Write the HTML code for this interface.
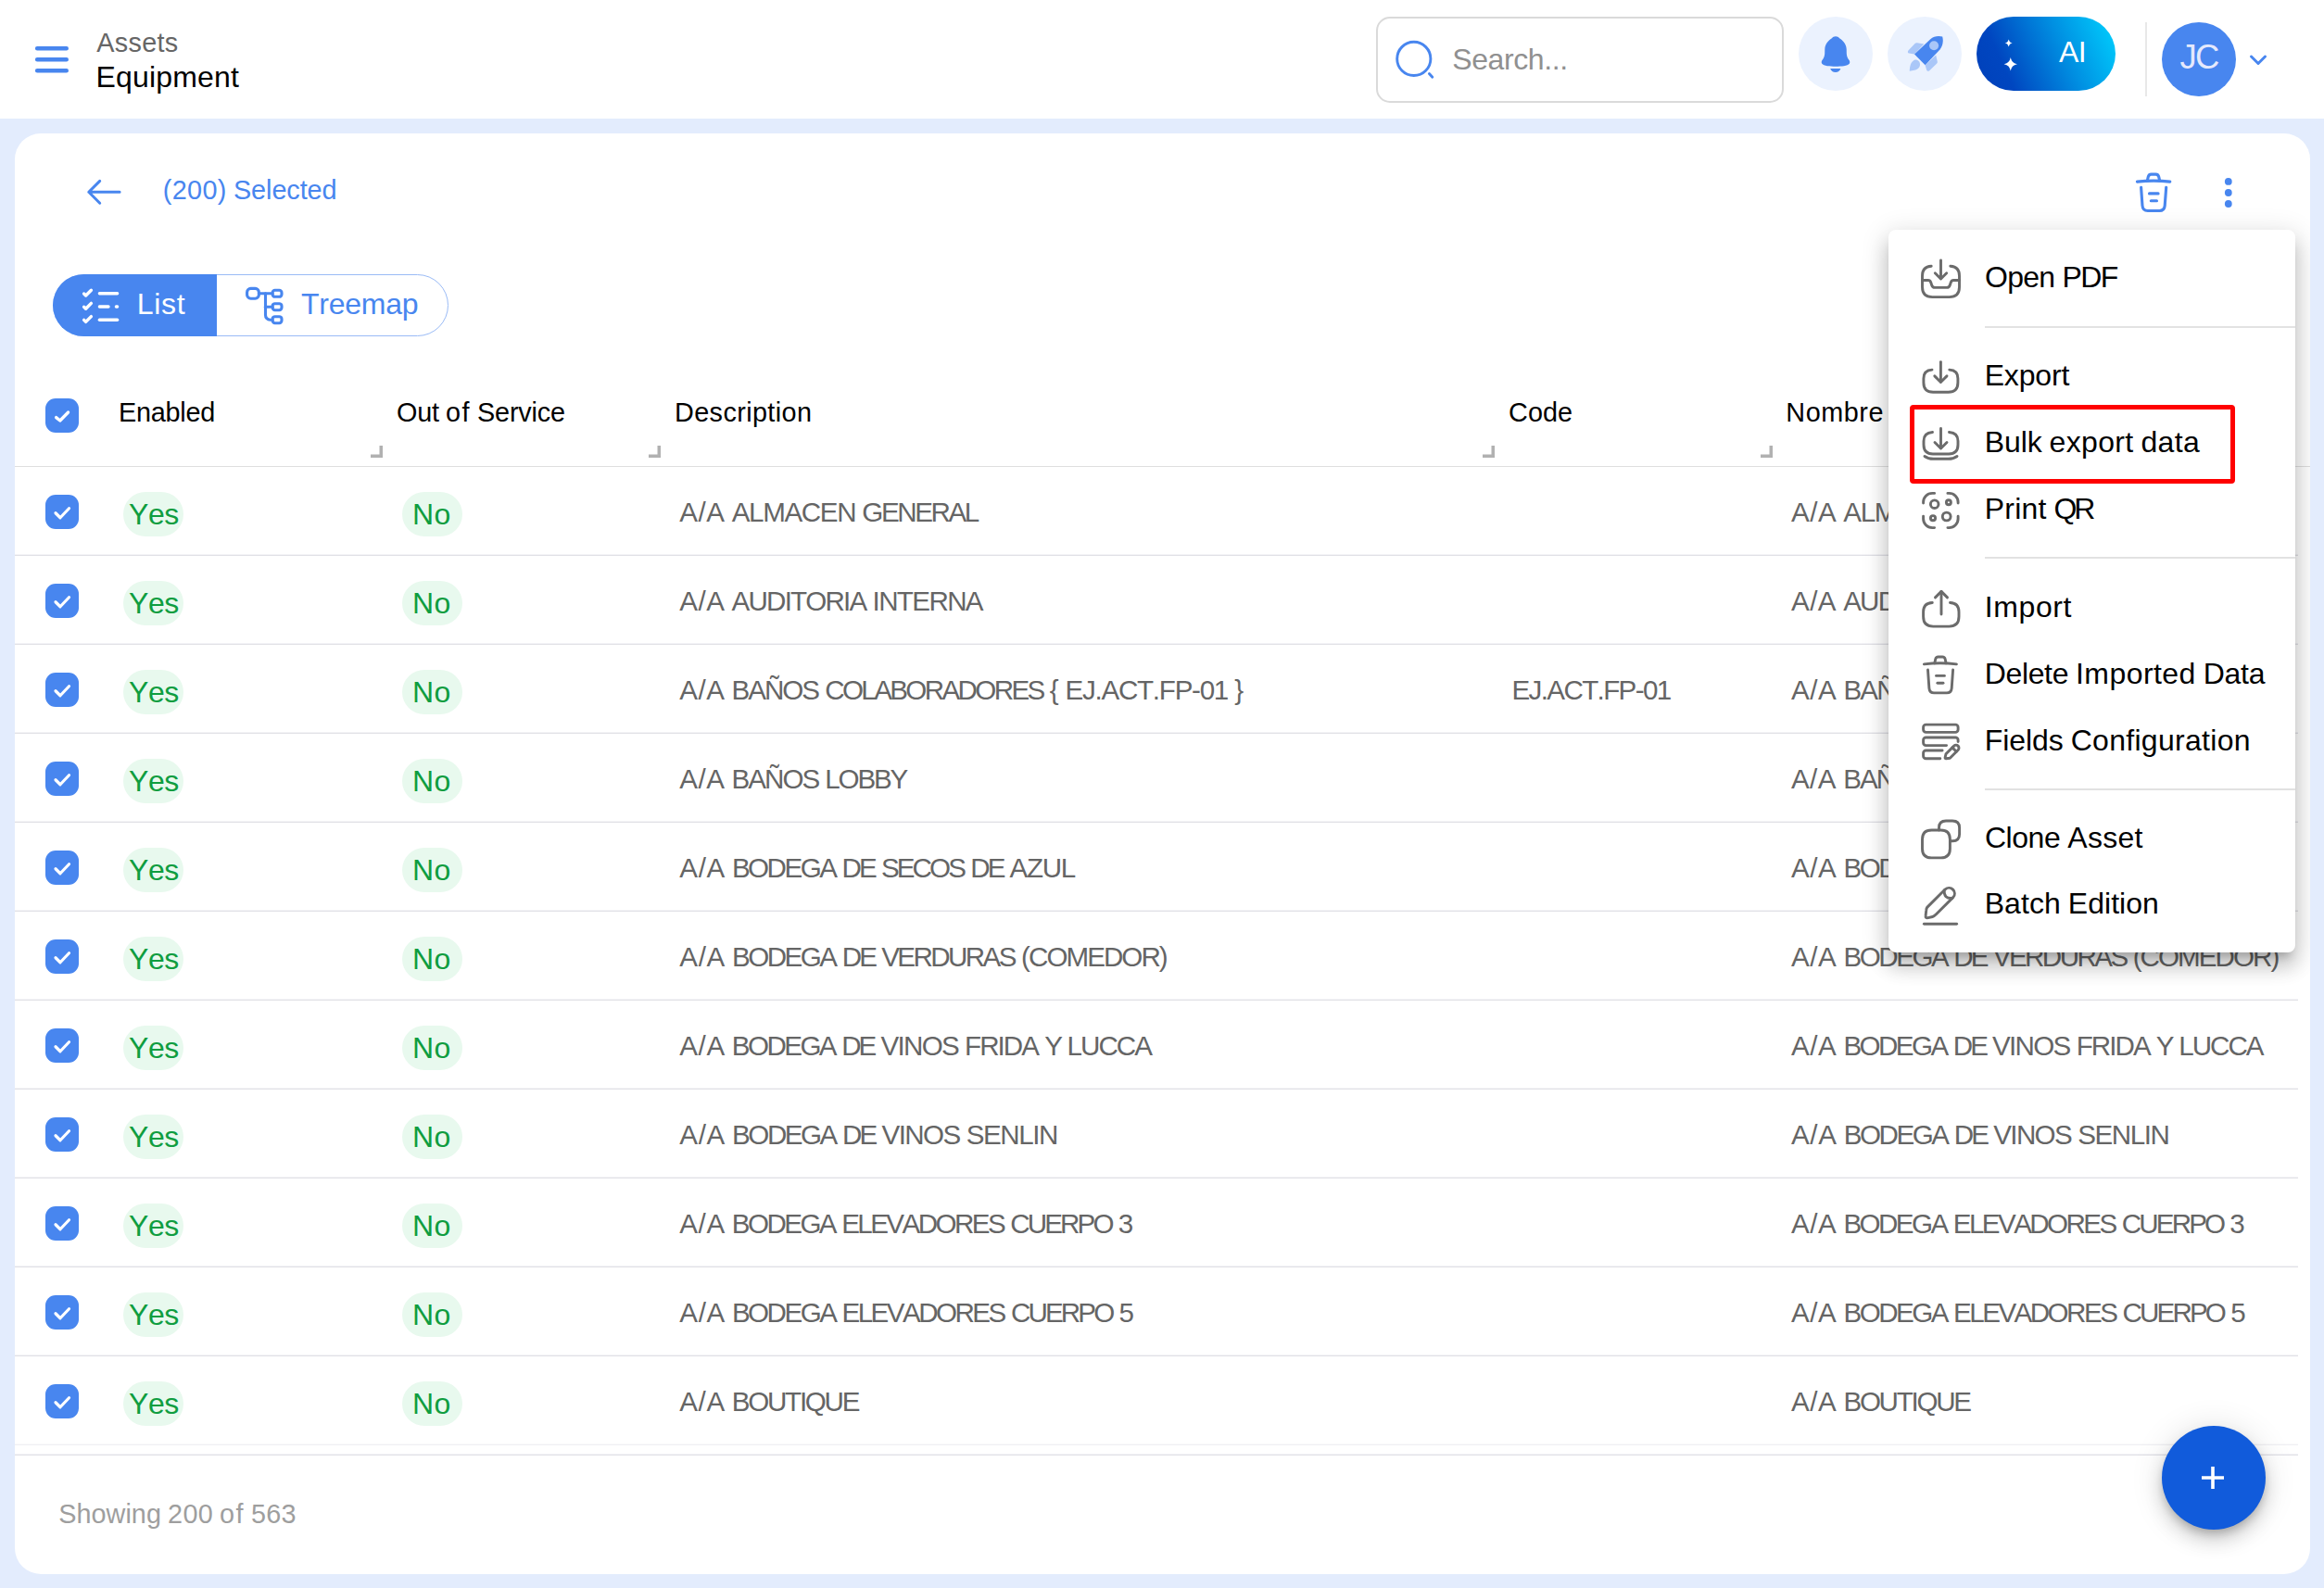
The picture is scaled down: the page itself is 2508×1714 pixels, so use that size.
<!DOCTYPE html>
<html lang="en"><head><meta charset="utf-8"><title>Equipment</title>
<style>
*{box-sizing:border-box;margin:0;padding:0}
html,body{width:2508px;height:1714px;overflow:hidden;background:#e3ecfd;font-family:"Liberation Sans",Arial,sans-serif}
.abs,.t,.cb,.pill,.hl,.mi,.rh{position:absolute}
.t{white-space:pre;line-height:1;font-kerning:none}
#hdr{position:absolute;left:0;top:0;width:2508px;height:128px;background:#fff}
#card{position:absolute;left:16px;top:144px;width:2477px;height:1555px;background:#fff;border-radius:28px}
.cb{left:49px;width:36px;height:37.5px;border-radius:11px;background:#4886ef}
.cb svg{display:block;width:36px;height:37.5px}
.pill{height:47.800px;border-radius:24px;background:#e8f9ee}
.hl{left:16px;width:2464px;height:2px;background:linear-gradient(#f3f3f6 50%,#e1e1e6 50%)}
.mi{left:2070px;width:48px;height:48px}
.rh{top:481.400px;width:13px;height:13px}
#menu{position:absolute;left:2022px;top:104px;width:439px;height:780px;background:#fff;border-radius:8px;box-shadow:0 10px 10px -6px rgba(0,0,0,.2),0 16px 20px 2px rgba(0,0,0,.14),0 6px 28px 4px rgba(0,0,0,.12)}
#clip{position:absolute;left:16px;top:144px;width:2477px;height:1555px;border-radius:28px;overflow:hidden}
.md{position:absolute;left:2142px;width:335px;height:2px;background:#e2e2e2}
</style></head><body>
<div id="hdr"></div>
<div id="card"></div>

<!-- hamburger -->
<svg class="abs" style="left:36px;top:48px" width="40" height="34" viewBox="0 0 40 34"><path d="M4.2 4.2h31.5M4.2 16.2h31.5M4.2 28.300h31.5" stroke="#4886ef" stroke-width="4.600" stroke-linecap="round"/></svg>

<!-- search -->
<div class="abs" style="left:1484.800px;top:17.5px;width:440.400px;height:93px;border:2px solid #dadada;border-radius:15px;background:#fff"></div>
<svg class="abs" style="left:1504px;top:42px" width="46" height="46" viewBox="0 0 46 46"><circle cx="21.800" cy="21.400" r="18.100" fill="none" stroke="#4886ef" stroke-width="2.900"/><path d="M38.400 37.5l3.400 3.700" stroke="#4886ef" stroke-width="2.900" stroke-linecap="round"/></svg>

<!-- bell -->
<div class="abs" style="left:1941px;top:17.5px;width:80px;height:80px;border-radius:50%;background:#ebf2fe"></div>
<svg class="abs" style="left:1961px;top:37px" width="40" height="42" viewBox="0 0 40 42"><path d="M20 2.300C18.2 2.300 17 3.2 15.600 4.400 12.600 6.600 8.600 9.600 8.300 16L8.2 21C8 24 7 26 5.800 27.600 4.600 29 4.400 30.5 5.2 31.800 7 34.2 14 34.800 20 34.800S33 34.2 34.800 31.800C35.600 30.5 35.400 29 34.2 27.600 33 26 32 24 31.800 21L31.700 16C31.400 9.600 27.400 6.600 24.400 4.400 23 3.2 21.800 2.300 20 2.300Z" fill="#4886ef"/><path d="M14.2 36.900H25.400C24.400 39.600 22.600 41 19.800 41S15.2 39.600 14.2 36.900Z" fill="#4886ef"/></svg>

<!-- rocket -->
<div class="abs" style="left:2037px;top:17.5px;width:80px;height:80px;border-radius:50%;background:#ebf2fe"></div>
<svg class="abs" style="left:2057px;top:37px" width="42" height="42" viewBox="0 0 42 42">
<path d="M2.400 17.5L9.800 9.800C10.400 9.2 11 9 11.800 9.2L19.300 10.400 9 21.600 3.2 20.600C1.800 20.300 1.400 18.700 2.400 17.5Z" fill="#aac7f8"/>
<path d="M20.600 33.2L32.2 22.5 33.800 29.5C34 30.300 33.800 31 33.2 31.600L25.2 39.300C24.2 40.2 22.600 39.900 22.100 38.600Z" fill="#aac7f8"/>
<path d="M3.800 39.700C3.800 35 5 30 8.5 28 11.5 26.5 15 29 15 32.400 15 36 12 38 9 38.800 7 39.300 5.5 39.600 3.800 39.700Z" fill="#aac7f8"/>
<path d="M9 21.600L26 5.5C30 2 35 1.5 39.2 2.600 40.400 7 39.800 12 36.5 16.5L20.600 33.2Z" fill="#4886ef"/>
<circle cx="30.100" cy="12.2" r="5" fill="#aac7f8"/>
</svg>

<!-- AI -->
<div class="abs" style="left:2133px;top:17.5px;width:150px;height:80px;border-radius:40px;background:linear-gradient(66deg,#0040ba 0%,#0046c0 22%,#0090e2 62%,#00d2ff 100%)"></div>
<svg class="abs" style="left:2155px;top:36px" width="30" height="46" viewBox="0 0 30 46" fill="#fff"><path d="M12.700 6.5c.8 2.600 1.400 3.2 4 4-2.600.8-3.2 1.400-4 4-.8-2.600-1.400-3.2-4-4 2.600-.8 3.2-1.400 4-4z"/><path d="M14.800 26c1.400 4.800 2.400 5.800 7.2 7.2-4.800 1.400-5.800 2.400-7.2 7.2-1.400-4.800-2.400-5.800-7.2-7.2 4.800-1.400 5.800-2.400 7.2-7.2z"/></svg>

<!-- divider + avatar -->
<div class="abs" style="left:2315px;top:24px;width:2px;height:80px;background:#e8e8e8"></div>
<div class="abs" style="left:2333px;top:24px;width:80px;height:80px;border-radius:50%;background:#4886ef"></div>
<svg class="abs" style="left:2425px;top:56px" width="24" height="18" viewBox="0 0 24 18"><path d="M4.5 5l7.5 7.5L19.5 5" fill="none" stroke="#4886ef" stroke-width="3" stroke-linecap="round" stroke-linejoin="round"/></svg>

<!-- back arrow -->
<svg class="abs" style="left:90px;top:190px" width="44" height="36" viewBox="0 0 44 36"><path d="M39.100 17.300H5.800M17.700 5.400L5.800 17.300 17.700 29.2" fill="none" stroke="#4886ef" stroke-width="3" stroke-linecap="round" stroke-linejoin="round"/></svg>

<!-- trash + dots -->
<svg class="abs" style="left:2302px;top:184px" width="44" height="48" viewBox="0 0 44 48" fill="none" stroke="#4886ef" stroke-width="3.100" stroke-linecap="round" stroke-linejoin="round"><path d="M4.400 12.100Q22.100 10.100 39.800 12.100"/><path d="M15.400 10.800l.8-3.700c.4-2 1.400-3 3.400-3h4.800c2 0 3 1 3.400 3l.8 3.700"/><path d="M8.600 18.2L10 38c.3 3.700 2.100 5.5 5.800 5.5h12.600c3.700 0 5.5-1.800 5.800-5.5L35.700 18.2"/><path d="M17.5 24.900h9.600"/><path d="M19.300 32.800h6.2"/></svg>
<svg class="abs" style="left:2396px;top:188px" width="18" height="40" viewBox="0 0 18 40" fill="#4886ef"><circle cx="8.800" cy="7.900" r="3.900"/><circle cx="8.800" cy="20" r="3.900"/><circle cx="8.800" cy="32" r="3.900"/></svg>

<!-- segmented -->
<div class="abs" style="left:57px;top:296px;width:427px;height:67px;border-radius:34px;border:1.5px solid #9abbf6;background:#fff"></div>
<div class="abs" style="left:57px;top:296px;width:177px;height:67px;border-radius:34px 0 0 34px;background:#4886ef"></div>
<svg class="abs" style="left:86px;top:308px" width="46" height="44" viewBox="0 0 46 44" fill="none" stroke="#fff" stroke-width="3.400" stroke-linecap="round" stroke-linejoin="round"><path d="M4.600 9L6.600 11l5.800-5.800"/><path d="M4.600 23.2l2 2 5.800-5.800"/><path d="M4.600 37.400l2 2 5.800-5.800"/><path d="M21.400 8.800h19.2"/><path d="M21.400 23H31M39.400 23h1.2"/><path d="M21.400 37.2h19.2"/></svg>
<svg class="abs" style="left:262px;top:307px" width="46" height="46" viewBox="0 0 46 46" fill="none" stroke="#4886ef" stroke-width="3.100" stroke-linecap="round" stroke-linejoin="round"><rect x="4.600" y="4.400" width="12.800" height="10.800" rx="4"/><rect x="32.100" y="6.300" width="9.900" height="7" rx="2.600"/><rect x="32.100" y="20.700" width="9.900" height="7" rx="2.600"/><rect x="32.100" y="34.700" width="9.900" height="7" rx="2.600"/><path d="M17.400 9.700H32.100"/><path d="M24.5 9.700V33a5 5 0 0 0 5 5.2h2.600"/><path d="M24.5 24.2h7.600"/></svg>

<!-- table header -->
<div class="cb" style="top:429.600px"><svg viewBox="0 0 36 37.5"><path d="M11.600 20.600L15.800 24l8.800-9" fill="none" stroke="#fff" stroke-width="3.300" stroke-linecap="round" stroke-linejoin="round"/></svg></div>
<svg class="rh" style="left:400px" viewBox="0 0 13 13"><path d="M0 11.250h11.250V0" fill="none" stroke="#b1b1b1" stroke-width="3.5"/></svg><svg class="rh" style="left:700px" viewBox="0 0 13 13"><path d="M0 11.250h11.250V0" fill="none" stroke="#b1b1b1" stroke-width="3.5"/></svg><svg class="rh" style="left:1600px" viewBox="0 0 13 13"><path d="M0 11.250h11.250V0" fill="none" stroke="#b1b1b1" stroke-width="3.5"/></svg><svg class="rh" style="left:1900px" viewBox="0 0 13 13"><path d="M0 11.250h11.250V0" fill="none" stroke="#b1b1b1" stroke-width="3.5"/></svg>
<div class="hl" style="top:502.700px;height:1.100px;width:2477px;background:#dfdfdf"></div>
<div class="cb" style="top:533.5px"><svg viewBox="0 0 36 37"><path d="M11 19.5l5 5 9.5-10" fill="none" stroke="#fff" stroke-width="3.2" stroke-linecap="round" stroke-linejoin="round"/></svg></div><div class="pill" style="left:133px;top:531.3px;width:65.2px"></div><div class="pill" style="left:433.800px;top:531.3px;width:65.2px"></div><div class="hl" style="top:598px"></div><div class="cb" style="top:629.5px"><svg viewBox="0 0 36 37"><path d="M11 19.5l5 5 9.5-10" fill="none" stroke="#fff" stroke-width="3.2" stroke-linecap="round" stroke-linejoin="round"/></svg></div><div class="pill" style="left:133px;top:627.3px;width:65.2px"></div><div class="pill" style="left:433.800px;top:627.3px;width:65.2px"></div><div class="hl" style="top:694px"></div><div class="cb" style="top:725.5px"><svg viewBox="0 0 36 37"><path d="M11 19.5l5 5 9.5-10" fill="none" stroke="#fff" stroke-width="3.2" stroke-linecap="round" stroke-linejoin="round"/></svg></div><div class="pill" style="left:133px;top:723.3px;width:65.2px"></div><div class="pill" style="left:433.800px;top:723.3px;width:65.2px"></div><div class="hl" style="top:790px"></div><div class="cb" style="top:821.5px"><svg viewBox="0 0 36 37"><path d="M11 19.5l5 5 9.5-10" fill="none" stroke="#fff" stroke-width="3.2" stroke-linecap="round" stroke-linejoin="round"/></svg></div><div class="pill" style="left:133px;top:819.3px;width:65.2px"></div><div class="pill" style="left:433.800px;top:819.3px;width:65.2px"></div><div class="hl" style="top:886px"></div><div class="cb" style="top:917.5px"><svg viewBox="0 0 36 37"><path d="M11 19.5l5 5 9.5-10" fill="none" stroke="#fff" stroke-width="3.2" stroke-linecap="round" stroke-linejoin="round"/></svg></div><div class="pill" style="left:133px;top:915.3px;width:65.2px"></div><div class="pill" style="left:433.800px;top:915.3px;width:65.2px"></div><div class="hl" style="top:982px"></div><div class="cb" style="top:1013.5px"><svg viewBox="0 0 36 37"><path d="M11 19.5l5 5 9.5-10" fill="none" stroke="#fff" stroke-width="3.2" stroke-linecap="round" stroke-linejoin="round"/></svg></div><div class="pill" style="left:133px;top:1011.3px;width:65.2px"></div><div class="pill" style="left:433.800px;top:1011.3px;width:65.2px"></div><div class="hl" style="top:1078px"></div><div class="cb" style="top:1109.5px"><svg viewBox="0 0 36 37"><path d="M11 19.5l5 5 9.5-10" fill="none" stroke="#fff" stroke-width="3.2" stroke-linecap="round" stroke-linejoin="round"/></svg></div><div class="pill" style="left:133px;top:1107.3px;width:65.2px"></div><div class="pill" style="left:433.800px;top:1107.3px;width:65.2px"></div><div class="hl" style="top:1174px"></div><div class="cb" style="top:1205.5px"><svg viewBox="0 0 36 37"><path d="M11 19.5l5 5 9.5-10" fill="none" stroke="#fff" stroke-width="3.2" stroke-linecap="round" stroke-linejoin="round"/></svg></div><div class="pill" style="left:133px;top:1203.3px;width:65.2px"></div><div class="pill" style="left:433.800px;top:1203.3px;width:65.2px"></div><div class="hl" style="top:1270px"></div><div class="cb" style="top:1301.5px"><svg viewBox="0 0 36 37"><path d="M11 19.5l5 5 9.5-10" fill="none" stroke="#fff" stroke-width="3.2" stroke-linecap="round" stroke-linejoin="round"/></svg></div><div class="pill" style="left:133px;top:1299.3px;width:65.2px"></div><div class="pill" style="left:433.800px;top:1299.3px;width:65.2px"></div><div class="hl" style="top:1366px"></div><div class="cb" style="top:1397.5px"><svg viewBox="0 0 36 37"><path d="M11 19.5l5 5 9.5-10" fill="none" stroke="#fff" stroke-width="3.2" stroke-linecap="round" stroke-linejoin="round"/></svg></div><div class="pill" style="left:133px;top:1395.3px;width:65.2px"></div><div class="pill" style="left:433.800px;top:1395.3px;width:65.2px"></div><div class="hl" style="top:1462px"></div><div class="cb" style="top:1493.5px"><svg viewBox="0 0 36 37"><path d="M11 19.5l5 5 9.5-10" fill="none" stroke="#fff" stroke-width="3.2" stroke-linecap="round" stroke-linejoin="round"/></svg></div><div class="pill" style="left:133px;top:1491.3px;width:65.2px"></div><div class="pill" style="left:433.800px;top:1491.3px;width:65.2px"></div><div class="hl" style="top:1558px;background:linear-gradient(#fafafb 50%,#f0f0f3 50%)"></div>
<div class="hl" style="top:1569px"></div>

<!-- FAB -->
<div class="abs" style="left:2333px;top:1539px;width:112px;height:112px;border-radius:50%;background:#115bdb;box-shadow:0 6px 10px -2px rgba(0,0,0,.2),0 12px 20px 0 rgba(0,0,0,.14),0 2px 36px 0 rgba(0,0,0,.12)"></div>
<svg class="abs" style="left:2372.400px;top:1578.900px" width="32" height="32" viewBox="0 0 32 32"><path d="M16 4v24M4 16h24" stroke="#fff" stroke-width="3.600"/></svg>

<span class="t" style="left:104.3px;top:31.7px;font-size:28.8px;color:#666;letter-spacing:0.28px;">Assets</span>
<span class="t" style="left:103.6px;top:66.9px;font-size:32px;color:#000;letter-spacing:0.17px;">Equipment</span>
<span class="t" style="left:1567.2px;top:47.9px;font-size:32px;color:#909090;letter-spacing:-0.40px;">Search...</span>
<span class="t" style="left:2222.0px;top:39.9px;font-size:32px;color:#fff;letter-spacing:-0.47px;">AI</span>
<span class="t" style="left:2352.5px;top:43.6px;font-size:36.5px;color:#e5e9fc;letter-spacing:-1.63px;">JC</span>
<span class="t" style="left:175.8px;top:191.1px;font-size:28.8px;color:#4886ef;"><span style="letter-spacing:0.35px;word-spacing:-1.16px">(200) </span><span style="letter-spacing:-0.07px">Selected</span></span>
<span class="t" style="left:147.8px;top:311.9px;font-size:32px;color:#fff;letter-spacing:0.67px;">List</span>
<span class="t" style="left:325.0px;top:311.9px;font-size:32px;color:#4886ef;letter-spacing:-0.24px;">Treemap</span>
<span class="t" style="left:127.9px;top:430.6px;font-size:28.8px;color:#000;letter-spacing:-0.20px;">Enabled</span>
<span class="t" style="left:428.1px;top:430.6px;font-size:28.8px;color:#000;"><span style="letter-spacing:-0.23px;word-spacing:-0.54px">Out </span><span style="letter-spacing:1.39px;word-spacing:-2.16px">of </span><span style="letter-spacing:-0.19px">Service</span></span>
<span class="t" style="left:728.0px;top:430.6px;font-size:28.8px;color:#000;letter-spacing:0.39px;">Description</span>
<span class="t" style="left:1628.1px;top:430.6px;font-size:28.8px;color:#000;letter-spacing:-0.00px;">Code</span>
<span class="t" style="left:1927.3px;top:430.6px;font-size:28.8px;color:#000;letter-spacing:0.55px;">Nombre</span>
<span class="t" style="left:733.3px;top:538.3px;font-size:29.6px;color:#656565;"><span style="letter-spacing:0.53px;word-spacing:-1.65px">A/A </span><span style="letter-spacing:-1.37px;word-spacing:0.26px">ALMACEN </span><span style="letter-spacing:-2.41px">GENERAL</span></span>
<span class="t" style="left:1932.9px;top:538.3px;font-size:29.6px;color:#656565;"><span style="letter-spacing:0.53px;word-spacing:-1.65px">A/A </span><span style="letter-spacing:-1.37px;word-spacing:0.26px">ALMACEN </span><span style="letter-spacing:-2.41px">GENERAL</span></span>
<span class="t" style="left:139.1px;top:538.9px;font-size:32px;color:#0f9d40;letter-spacing:-0.55px;">Yes</span>
<span class="t" style="left:444.9px;top:538.9px;font-size:32px;color:#0f9d40;letter-spacing:0.58px;">No</span>
<span class="t" style="left:733.3px;top:634.3px;font-size:29.6px;color:#656565;"><span style="letter-spacing:0.50px;word-spacing:-1.63px">A/A </span><span style="letter-spacing:-1.81px;word-spacing:0.69px">AUDITORIA </span><span style="letter-spacing:-1.64px">INTERNA</span></span>
<span class="t" style="left:1932.9px;top:634.3px;font-size:29.6px;color:#656565;"><span style="letter-spacing:0.50px;word-spacing:-1.63px">A/A </span><span style="letter-spacing:-1.81px;word-spacing:0.69px">AUDITORIA </span><span style="letter-spacing:-1.64px">INTERNA</span></span>
<span class="t" style="left:139.1px;top:634.9px;font-size:32px;color:#0f9d40;letter-spacing:-0.55px;">Yes</span>
<span class="t" style="left:444.9px;top:634.9px;font-size:32px;color:#0f9d40;letter-spacing:0.58px;">No</span>
<span class="t" style="left:733.3px;top:730.3px;font-size:29.6px;color:#656565;"><span style="letter-spacing:0.48px;word-spacing:-1.62px">A/A </span><span style="letter-spacing:-2.01px;word-spacing:0.87px">BAÑOS </span><span style="letter-spacing:-2.63px;word-spacing:1.49px">COLABORADORES </span><span style="letter-spacing:-0.20px;word-spacing:-0.94px">{ </span><span style="letter-spacing:-1.27px;word-spacing:0.14px">EJ.ACT.FP-01 </span><span style="letter-spacing:-0.20px">}</span></span>
<span class="t" style="left:1631.5px;top:730.3px;font-size:29.6px;color:#656565;letter-spacing:-1.64px;">EJ.ACT.FP-01</span>
<span class="t" style="left:1932.9px;top:730.3px;font-size:29.6px;color:#656565;"><span style="letter-spacing:0.58px;word-spacing:-1.67px">A/A </span><span style="letter-spacing:-1.90px;word-spacing:0.80px">BAÑOS </span><span style="letter-spacing:-2.52px">COLABORADORES</span></span>
<span class="t" style="left:139.1px;top:730.9px;font-size:32px;color:#0f9d40;letter-spacing:-0.55px;">Yes</span>
<span class="t" style="left:444.9px;top:730.9px;font-size:32px;color:#0f9d40;letter-spacing:0.58px;">No</span>
<span class="t" style="left:733.3px;top:826.3px;font-size:29.6px;color:#656565;"><span style="letter-spacing:0.49px;word-spacing:-1.62px">A/A </span><span style="letter-spacing:-2.00px;word-spacing:0.87px">BAÑOS </span><span style="letter-spacing:-2.15px">LOBBY</span></span>
<span class="t" style="left:1932.9px;top:826.3px;font-size:29.6px;color:#656565;"><span style="letter-spacing:0.49px;word-spacing:-1.62px">A/A </span><span style="letter-spacing:-2.00px;word-spacing:0.87px">BAÑOS </span><span style="letter-spacing:-2.15px">LOBBY</span></span>
<span class="t" style="left:139.1px;top:826.9px;font-size:32px;color:#0f9d40;letter-spacing:-0.55px;">Yes</span>
<span class="t" style="left:444.9px;top:826.9px;font-size:32px;color:#0f9d40;letter-spacing:0.58px;">No</span>
<span class="t" style="left:733.3px;top:922.3px;font-size:29.6px;color:#656565;"><span style="letter-spacing:0.59px;word-spacing:-1.68px">A/A </span><span style="letter-spacing:-2.53px;word-spacing:1.44px">BODEGA </span><span style="letter-spacing:-2.92px;word-spacing:1.83px">DE </span><span style="letter-spacing:-2.89px;word-spacing:1.81px">SECOS </span><span style="letter-spacing:-2.92px;word-spacing:1.83px">DE </span><span style="letter-spacing:-1.35px">AZUL</span></span>
<span class="t" style="left:1932.9px;top:922.3px;font-size:29.6px;color:#656565;"><span style="letter-spacing:0.59px;word-spacing:-1.68px">A/A </span><span style="letter-spacing:-2.53px;word-spacing:1.44px">BODEGA </span><span style="letter-spacing:-2.92px;word-spacing:1.83px">DE </span><span style="letter-spacing:-2.89px;word-spacing:1.81px">SECOS </span><span style="letter-spacing:-2.92px;word-spacing:1.83px">DE </span><span style="letter-spacing:-1.35px">AZUL</span></span>
<span class="t" style="left:139.1px;top:922.9px;font-size:32px;color:#0f9d40;letter-spacing:-0.55px;">Yes</span>
<span class="t" style="left:444.9px;top:922.9px;font-size:32px;color:#0f9d40;letter-spacing:0.58px;">No</span>
<span class="t" style="left:733.3px;top:1018.3px;font-size:29.6px;color:#656565;"><span style="letter-spacing:0.61px;word-spacing:-1.69px">A/A </span><span style="letter-spacing:-2.51px;word-spacing:1.43px">BODEGA </span><span style="letter-spacing:-2.90px;word-spacing:1.82px">DE </span><span style="letter-spacing:-2.58px;word-spacing:1.50px">VERDURAS </span><span style="letter-spacing:-1.96px">(COMEDOR)</span></span>
<span class="t" style="left:1932.9px;top:1018.3px;font-size:29.6px;color:#656565;"><span style="letter-spacing:0.61px;word-spacing:-1.69px">A/A </span><span style="letter-spacing:-2.51px;word-spacing:1.43px">BODEGA </span><span style="letter-spacing:-2.90px;word-spacing:1.82px">DE </span><span style="letter-spacing:-2.58px;word-spacing:1.50px">VERDURAS </span><span style="letter-spacing:-1.96px">(COMEDOR)</span></span>
<span class="t" style="left:139.1px;top:1018.9px;font-size:32px;color:#0f9d40;letter-spacing:-0.55px;">Yes</span>
<span class="t" style="left:444.9px;top:1018.9px;font-size:32px;color:#0f9d40;letter-spacing:0.58px;">No</span>
<span class="t" style="left:733.3px;top:1114.3px;font-size:29.6px;color:#656565;"><span style="letter-spacing:0.56px;word-spacing:-1.66px">A/A </span><span style="letter-spacing:-2.57px;word-spacing:1.46px">BODEGA </span><span style="letter-spacing:-2.95px;word-spacing:1.85px">DE </span><span style="letter-spacing:-1.73px;word-spacing:0.63px">VINOS </span><span style="letter-spacing:-1.95px;word-spacing:0.85px">FRIDA </span><span style="letter-spacing:-2.47px;word-spacing:1.36px">Y </span><span style="letter-spacing:-2.00px">LUCCA</span></span>
<span class="t" style="left:1932.9px;top:1114.3px;font-size:29.6px;color:#656565;"><span style="letter-spacing:0.56px;word-spacing:-1.66px">A/A </span><span style="letter-spacing:-2.57px;word-spacing:1.46px">BODEGA </span><span style="letter-spacing:-2.95px;word-spacing:1.85px">DE </span><span style="letter-spacing:-1.73px;word-spacing:0.63px">VINOS </span><span style="letter-spacing:-1.95px;word-spacing:0.85px">FRIDA </span><span style="letter-spacing:-2.47px;word-spacing:1.36px">Y </span><span style="letter-spacing:-2.00px">LUCCA</span></span>
<span class="t" style="left:139.1px;top:1114.9px;font-size:32px;color:#0f9d40;letter-spacing:-0.55px;">Yes</span>
<span class="t" style="left:444.9px;top:1114.9px;font-size:32px;color:#0f9d40;letter-spacing:0.58px;">No</span>
<span class="t" style="left:733.3px;top:1210.3px;font-size:29.6px;color:#656565;"><span style="letter-spacing:0.64px;word-spacing:-1.71px">A/A </span><span style="letter-spacing:-2.47px;word-spacing:1.41px">BODEGA </span><span style="letter-spacing:-2.86px;word-spacing:1.80px">DE </span><span style="letter-spacing:-1.64px;word-spacing:0.58px">VINOS </span><span style="letter-spacing:-1.45px">SENLIN</span></span>
<span class="t" style="left:1932.9px;top:1210.3px;font-size:29.6px;color:#656565;"><span style="letter-spacing:0.64px;word-spacing:-1.71px">A/A </span><span style="letter-spacing:-2.47px;word-spacing:1.41px">BODEGA </span><span style="letter-spacing:-2.86px;word-spacing:1.80px">DE </span><span style="letter-spacing:-1.64px;word-spacing:0.58px">VINOS </span><span style="letter-spacing:-1.45px">SENLIN</span></span>
<span class="t" style="left:139.1px;top:1210.9px;font-size:32px;color:#0f9d40;letter-spacing:-0.55px;">Yes</span>
<span class="t" style="left:444.9px;top:1210.9px;font-size:32px;color:#0f9d40;letter-spacing:0.58px;">No</span>
<span class="t" style="left:733.3px;top:1306.3px;font-size:29.6px;color:#656565;"><span style="letter-spacing:0.56px;word-spacing:-1.66px">A/A </span><span style="letter-spacing:-2.57px;word-spacing:1.46px">BODEGA </span><span style="letter-spacing:-2.57px;word-spacing:1.47px">ELEVADORES </span><span style="letter-spacing:-2.88px;word-spacing:1.78px">CUERPO </span><span style="letter-spacing:-0.31px">3</span></span>
<span class="t" style="left:1932.9px;top:1306.3px;font-size:29.6px;color:#656565;"><span style="letter-spacing:0.56px;word-spacing:-1.66px">A/A </span><span style="letter-spacing:-2.57px;word-spacing:1.46px">BODEGA </span><span style="letter-spacing:-2.57px;word-spacing:1.47px">ELEVADORES </span><span style="letter-spacing:-2.88px;word-spacing:1.78px">CUERPO </span><span style="letter-spacing:-0.31px">3</span></span>
<span class="t" style="left:139.1px;top:1306.9px;font-size:32px;color:#0f9d40;letter-spacing:-0.55px;">Yes</span>
<span class="t" style="left:444.9px;top:1306.9px;font-size:32px;color:#0f9d40;letter-spacing:0.58px;">No</span>
<span class="t" style="left:733.3px;top:1402.3px;font-size:29.6px;color:#656565;"><span style="letter-spacing:0.59px;word-spacing:-1.68px">A/A </span><span style="letter-spacing:-2.53px;word-spacing:1.44px">BODEGA </span><span style="letter-spacing:-2.54px;word-spacing:1.45px">ELEVADORES </span><span style="letter-spacing:-2.85px;word-spacing:1.76px">CUERPO </span><span style="letter-spacing:-0.28px">5</span></span>
<span class="t" style="left:1932.9px;top:1402.3px;font-size:29.6px;color:#656565;"><span style="letter-spacing:0.59px;word-spacing:-1.68px">A/A </span><span style="letter-spacing:-2.53px;word-spacing:1.44px">BODEGA </span><span style="letter-spacing:-2.54px;word-spacing:1.45px">ELEVADORES </span><span style="letter-spacing:-2.85px;word-spacing:1.76px">CUERPO </span><span style="letter-spacing:-0.28px">5</span></span>
<span class="t" style="left:139.1px;top:1402.9px;font-size:32px;color:#0f9d40;letter-spacing:-0.55px;">Yes</span>
<span class="t" style="left:444.9px;top:1402.9px;font-size:32px;color:#0f9d40;letter-spacing:0.58px;">No</span>
<span class="t" style="left:733.3px;top:1498.3px;font-size:29.6px;color:#656565;"><span style="letter-spacing:0.57px;word-spacing:-1.67px">A/A </span><span style="letter-spacing:-2.29px">BOUTIQUE</span></span>
<span class="t" style="left:1932.9px;top:1498.3px;font-size:29.6px;color:#656565;"><span style="letter-spacing:0.57px;word-spacing:-1.67px">A/A </span><span style="letter-spacing:-2.29px">BOUTIQUE</span></span>
<span class="t" style="left:139.1px;top:1498.9px;font-size:32px;color:#0f9d40;letter-spacing:-0.55px;">Yes</span>
<span class="t" style="left:444.9px;top:1498.9px;font-size:32px;color:#0f9d40;letter-spacing:0.58px;">No</span>
<span class="t" style="left:63.2px;top:1620.4px;font-size:28.8px;color:#9e9e9e;"><span style="letter-spacing:0.04px;word-spacing:-0.87px">Showing </span><span style="letter-spacing:0.26px;word-spacing:-1.09px">200 </span><span style="letter-spacing:1.29px;word-spacing:-2.11px">of </span><span style="letter-spacing:0.26px">563</span></span>

<!-- menu -->
<div id="clip"><div id="menu"></div></div>
<div class="md" style="top:352px"></div>
<div class="md" style="top:601px"></div>
<div class="md" style="top:851px"></div>
<svg class="mi" style="top:276px" viewBox="0 0 48 48" fill="none" stroke="#6b6b6b" stroke-width="2.900" stroke-linecap="round" stroke-linejoin="round"><path d="M24.5 5v19.5"/><path d="M18.300 18.800l6.2 6.2 6.2-6.2"/><path d="M14.2 11.300c-6.5.3-9.700 4-9.700 10.5v12c0 7.2 3.600 10.800 10.800 10.800h18.400c7.2 0 10.800-3.600 10.800-10.800v-12c0-6.5-3.2-10.2-9.700-10.5"/><path d="M4.5 26.5h6.300c1.5 0 2.400.8 2.900 2.2l.9 2.800c.6 1.900 1.700 2.900 3.5 2.900h12.800c1.800 0 2.900-1 3.5-2.900l.9-2.800c.5-1.400 1.400-2.2 2.900-2.2h6.300"/></svg><svg class="mi" style="top:381.5px" viewBox="0 0 48 48" fill="none" stroke="#6b6b6b" stroke-width="2.900" stroke-linecap="round" stroke-linejoin="round"><path d="M24.400 8.600v21.400"/><path d="M17.800 23.900l6.600 6.600 6.600-6.600"/><path d="M15 17.100c-6 .3-9.100 3.600-9.100 9.400v4.5c0 6.900 3.400 10.300 10.300 10.300h16.400c6.900 0 10.300-3.400 10.300-10.300v-4.5c0-5.800-3.100-9.100-9.100-9.400"/></svg><svg class="mi" style="top:453.5px" viewBox="0 0 48 48" fill="none" stroke="#6b6b6b" stroke-width="2.900" stroke-linecap="round" stroke-linejoin="round"><path d="M24.5 8.5v21"/><path d="M18 23.5l6.5 6.5 6.5-6.5"/><path d="M15.5 12.5c-6.300.4-9.5 3.700-9.5 9.5v4c0 6.700 3.300 10 10 10h17c6.700 0 10-3.300 10-10v-4c0-5.800-3.2-9.100-9.5-9.5"/><path d="M7 38.5c2.5 1.900 5.5 2.800 9.5 2.800h16c4 0 7-.9 9.5-2.800"/></svg><svg class="mi" style="top:525.5px" viewBox="0 0 48 48" fill="none" stroke="#6b6b6b" stroke-width="2.900" stroke-linecap="round" stroke-linejoin="round"><path d="M5.600 17v-1a9.600 9.600 0 0 1 9.600-9.600h2.400"/><path d="M31.900 6.400h1.600a9.600 9.600 0 0 1 9.600 9.600v1"/><path d="M43.100 31.300v2.700a9.600 9.600 0 0 1-9.600 9.600h-1.600"/><path d="M17.600 43.600h-2.400a9.600 9.600 0 0 1-9.600-9.600v-2.700"/><circle cx="17.700" cy="18.2" r="4.300"/><circle cx="32.900" cy="16.2" r="2.5"/><circle cx="16" cy="33.2" r="2.600"/><circle cx="30.700" cy="31.5" r="4.400"/></svg><svg class="mi" style="top:631.5px" viewBox="0 0 48 48" fill="none" stroke="#6b6b6b" stroke-width="2.900" stroke-linecap="round" stroke-linejoin="round"><path d="M25 31.100V6.5"/><path d="M18.5 12.900l6.5-6.5 6.5 6.5"/><path d="M15.300 18.5c-6.5.3-9.700 3.800-9.700 10v5c0 7.100 3.5 10.600 10.600 10.600h17.2c7.100 0 10.600-3.5 10.600-10.600v-5c0-6.2-3.2-9.700-9.5-10"/></svg><svg class="mi" style="top:703.5px" viewBox="0 0 48 48" fill="none" stroke="#6b6b6b" stroke-width="2.900" stroke-linecap="round" stroke-linejoin="round"><path d="M6.400 12.900c11.700-1.600 23.300-1.600 35 0"/><path d="M17.800 11.800l.9-4.300c.4-1.700 1.300-2.5 3-2.5h4.5c1.700 0 2.600.8 3 2.5l.9 4.300"/><path d="M10.5 19l1.400 19.800c.3 3.400 2 5.100 5.400 5.100h13.5c3.400 0 5.100-1.700 5.400-5.100L37.600 19"/><path d="M19.5 25.400h8.900"/><path d="M20.900 33.2h6.100"/></svg><svg class="mi" style="top:775.5px" viewBox="0 0 48 48" fill="none" stroke="#6b6b6b" stroke-width="2.900" stroke-linecap="round" stroke-linejoin="round"><rect x="5.600" y="6.100" width="37.5" height="8.300" rx="2.800"/><path d="M43.100 24.600v-1.800a2.800 2.800 0 0 0-2.800-2.800H8.400a2.800 2.800 0 0 0-2.800 2.800v3a2.800 2.800 0 0 0 2.800 2.800h22.2"/><path d="M26.100 34H8.400a2.800 2.800 0 0 0-2.800 2.800v3.100a2.800 2.800 0 0 0 2.800 2.800h15.400"/><path d="M30.300 42.700c-.9.2-1.400-.4-1.2-1.2l.9-3.700 8.700-8.700a3.100 3.100 0 0 1 4.400 4.400l-8.700 8.700z"/><path d="M36.900 30.900l4.400 4.400"/></svg><svg class="mi" style="top:880.5px" viewBox="0 0 48 48" fill="none" stroke="#6b6b6b" stroke-width="2.900" stroke-linecap="round" stroke-linejoin="round"><path d="M14.5 15h10c6.600 0 9.900 3.300 9.900 9.900v10.100c0 6.600-3.300 9.900-9.900 9.900h-10c-6.700 0-10-3.300-10-9.900V24.900c0-6.600 3.300-9.900 10-9.900z"/><path d="M22.5 15v-2.5c0-5 2.5-7.5 7.5-7.5h7.100c5 0 7.5 2.5 7.5 7.5v6.700c0 5-2.5 7.5-7.5 7.5h-2.700"/></svg><svg class="mi" style="top:952px" viewBox="0 0 48 48" fill="none" stroke="#6b6b6b" stroke-width="2.900" stroke-linecap="round" stroke-linejoin="round"><path d="M6.400 45.300h35.2"/><path d="M9.700 27.400L29.300 7.800a6.100 6.100 0 0 1 8.600 8.600L19.5 34.800c-1.400 1.400-2.300 2.300-4 2.700l-4.800 1.2c-1.900.4-2.900-.5-2.600-2.300l.6-5.5c.1-1.5.3-2.400 1-3.5z"/><path d="M28.2 8.900Q27.5 18.2 36.800 17.5"/></svg>
<div class="abs" style="left:2061px;top:437px;width:351px;height:84.5px;border:5.5px solid #f00;border-radius:4px"></div>

<span class="t" style="left:2142.0px;top:283.3px;font-size:32px;color:#000;"><span style="letter-spacing:-0.73px;word-spacing:-0.15px">Open </span><span style="letter-spacing:-1.51px">PDF</span></span>
<span class="t" style="left:2141.7px;top:388.8px;font-size:32px;color:#000;letter-spacing:-0.16px;">Export</span>
<span class="t" style="left:2141.7px;top:460.8px;font-size:32px;color:#000;"><span style="letter-spacing:-0.08px;word-spacing:-0.84px">Bulk </span><span style="letter-spacing:0.32px;word-spacing:-1.24px">export </span><span style="letter-spacing:0.36px">data</span></span>
<span class="t" style="left:2141.7px;top:532.8px;font-size:32px;color:#000;"><span style="letter-spacing:0.22px;word-spacing:-1.19px">Print </span><span style="letter-spacing:-3.15px">QR</span></span>
<span class="t" style="left:2141.8px;top:638.8px;font-size:32px;color:#000;letter-spacing:0.59px;">Import</span>
<span class="t" style="left:2141.7px;top:710.8px;font-size:32px;color:#000;"><span style="letter-spacing:-0.35px;word-spacing:-0.59px">Delete </span><span style="letter-spacing:0.43px;word-spacing:-1.37px">Imported </span><span style="letter-spacing:-0.28px">Data</span></span>
<span class="t" style="left:2141.7px;top:782.8px;font-size:32px;color:#000;"><span style="letter-spacing:-0.06px;word-spacing:-0.88px">Fields </span><span style="letter-spacing:0.30px">Configuration</span></span>
<span class="t" style="left:2141.9px;top:887.8px;font-size:32px;color:#000;"><span style="letter-spacing:-0.43px;word-spacing:-0.54px">Clone </span><span style="letter-spacing:0.25px">Asset</span></span>
<span class="t" style="left:2141.7px;top:959.3px;font-size:32px;color:#000;"><span style="letter-spacing:0.07px;word-spacing:-1.03px">Batch </span><span style="letter-spacing:0.04px">Edition</span></span>
</body></html>
